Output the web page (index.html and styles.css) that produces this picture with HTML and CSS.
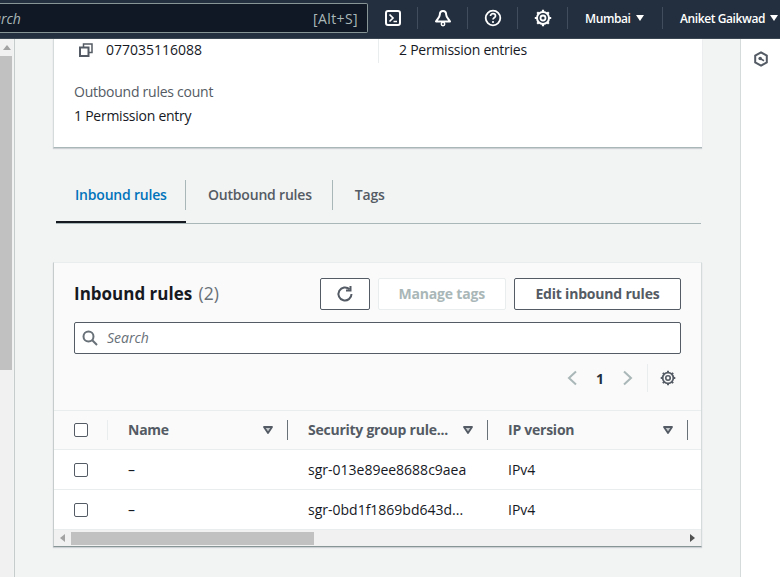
FILE: index.html
```html
<!DOCTYPE html>
<html lang="en">
<head>
  <meta charset="UTF-8">
  <title>Security group - Inbound rules</title>
  <link rel="stylesheet" href="styles.css">
</head>
<body>

<header class="topbar">
  <div class="search-box">
    <span class="search-text">Search</span>
    <span class="search-key">[Alt+S]</span>
  </div>
  <div class="top-item top-icon">
    <svg width="18" height="18" viewBox="0 0 18 18"><rect x="2" y="2" width="14" height="14" rx="2" fill="none" stroke="#fff" stroke-width="2"/><path d="M5.500 5.500L9 9l-3.500 3.500M9.500 12.500h3.500" fill="none" stroke="#fff" stroke-width="1.700"/></svg>
  </div>
  <div class="top-item top-icon">
    <svg width="18" height="18" viewBox="0 0 18 18"><path d="M9 2C6.800 2 5.800 3.800 5.800 5.800c0 2.400-2.300 4-3.800 6.700h14c-1.500-2.700-3.800-4.300-3.800-6.700C12.200 3.800 11.200 2 9 2z" fill="none" stroke="#fff" stroke-width="2" stroke-linejoin="round"/><circle cx="9" cy="15" r="1.700" fill="none" stroke="#fff" stroke-width="1.500"/></svg>
  </div>
  <div class="top-item top-icon">
    <svg width="18" height="18" viewBox="0 0 18 18"><circle cx="9" cy="9" r="7.300" fill="none" stroke="#fff" stroke-width="1.800"/><path d="M6.500 7c0-1.500 1.100-2.300 2.500-2.300s2.500.9 2.500 2.200c0 1.900-2.500 1.800-2.500 3.700" fill="none" stroke="#fff" stroke-width="1.700"/><circle cx="9" cy="13" r="1.100" fill="#fff"/></svg>
  </div>
  <div class="top-item top-icon">
    <svg width="18" height="18" viewBox="0 0 18 18"><circle cx="9" cy="9" r="6" fill="none" stroke="#fff" stroke-width="2"/><circle cx="9" cy="9" r="2.500" fill="none" stroke="#fff" stroke-width="1.800"/><path d="M9 .8v2.400M9 14.800v2.400M.8 9h2.400M14.800 9h2.400M3.200 3.200l1.700 1.700M13.100 13.100l1.700 1.700M3.200 14.800l1.700-1.700M13.100 4.900l1.700-1.700" stroke="#fff" stroke-width="2.200"/></svg>
  </div>
  <div class="top-item top-menu">Mumbai <span class="caret"></span></div>
  <div class="top-item top-menu last">Aniket Gaikwad <span class="caret"></span></div>
</header>

<div class="shell">
  <aside class="nav-scroll">
    <div class="nav-track">
      <span class="arrow-up"></span>
      <div class="nav-thumb"></div>
    </div>
  </aside>

  <main class="content">
    <section class="details">
      <div class="details-row">
        <div class="details-col">
          <div class="owner">
            <svg width="14" height="14" viewBox="0 0 14 14"><rect x="1" y="4.500" width="8.500" height="8.500" fill="none" stroke="#545b64" stroke-width="2"/><path d="M4.500 4V1h8.500v8.500h-3" fill="none" stroke="#545b64" stroke-width="1.500"/></svg>
            <span>077035116088</span>
          </div>
          <div class="label">Outbound rules count</div>
          <div class="value">1 Permission entry</div>
        </div>
        <div class="details-col second">
          <div class="value">2 Permission entries</div>
        </div>
      </div>
    </section>

    <nav class="tabs">
      <div class="tab active"><span>Inbound rules</span></div>
      <div class="tab"><span>Outbound rules</span></div>
      <div class="tab"><span>Tags</span></div>
    </nav>

    <section class="panel">
      <div class="panel-head">
        <h2>Inbound rules <span class="count">(2)</span></h2>
        <div class="actions">
          <button class="btn btn-icon">
            <svg width="18" height="18" viewBox="0 0 18 18"><path d="M15.500 9a6.500 6.500 0 1 1-2-4.700" fill="none" stroke="#545b64" stroke-width="2"/><path d="M14.500 1v4.500H10" fill="none" stroke="#545b64" stroke-width="2"/></svg>
          </button>
          <button class="btn btn-off">Manage tags</button>
          <button class="btn btn-edit">Edit inbound rules</button>
        </div>
      </div>

      <div class="filter">
        <svg width="16" height="16" viewBox="0 0 16 16"><circle cx="6.500" cy="6.500" r="5" fill="none" stroke="#687078" stroke-width="2"/><path d="M10.300 10.300L15 15" stroke="#687078" stroke-width="2"/></svg>
        <span>Search</span>
      </div>

      <div class="pager">
        <svg width="12" height="16" viewBox="0 0 12 16"><path d="M10 1.500L3 8l7 6.500" fill="none" stroke="#aab7b8" stroke-width="2"/></svg>
        <b>1</b>
        <svg width="12" height="16" viewBox="0 0 12 16"><path d="M2 1.500L9 8l-7 6.500" fill="none" stroke="#aab7b8" stroke-width="2"/></svg>
        <span class="pager-sep"></span>
        <svg width="16" height="16" viewBox="0 0 18 18"><circle cx="9" cy="9" r="6" fill="none" stroke="#545b64" stroke-width="2"/><circle cx="9" cy="9" r="2.500" fill="none" stroke="#545b64" stroke-width="1.800"/><path d="M9 .8v2.400M9 14.800v2.400M.8 9h2.400M14.800 9h2.400M3.200 3.200l1.700 1.700M13.100 13.100l1.700 1.700M3.200 14.800l1.700-1.700M13.100 4.900l1.700-1.700" stroke="#545b64" stroke-width="2.200"/></svg>
      </div>

      <div class="grid-row grid-head">
        <div class="c-check"><span class="check"></span></div>
        <div class="c-name"><span>Name</span><svg class="sort" width="10" height="8" viewBox="0 0 10 8"><path d="M1 1h8L5 7z" fill="#c4c9cc" stroke="#545b64" stroke-width="1.800" stroke-linejoin="round"/></svg></div>
        <div class="c-rule"><span>Security group rule...</span><svg class="sort" width="10" height="8" viewBox="0 0 10 8"><path d="M1 1h8L5 7z" fill="#c4c9cc" stroke="#545b64" stroke-width="1.800" stroke-linejoin="round"/></svg></div>
        <div class="c-ip"><span>IP version</span><svg class="sort" width="10" height="8" viewBox="0 0 10 8"><path d="M1 1h8L5 7z" fill="#c4c9cc" stroke="#545b64" stroke-width="1.800" stroke-linejoin="round"/></svg></div>
      </div>
      <div class="grid-row">
        <div class="c-check"><span class="check"></span></div>
        <div class="c-name">–</div>
        <div class="c-rule">sgr-013e89ee8688c9aea</div>
        <div class="c-ip">IPv4</div>
      </div>
      <div class="grid-row">
        <div class="c-check"><span class="check"></span></div>
        <div class="c-name">–</div>
        <div class="c-rule">sgr-0bd1f1869bd643d...</div>
        <div class="c-ip">IPv4</div>
      </div>

      <div class="hscroll">
        <span class="arrow-left"></span>
        <div class="hscroll-thumb"></div>
        <span class="arrow-right"></span>
      </div>
    </section>
  </main>

  <aside class="side-rail">
    <svg width="16" height="16" viewBox="0 0 16 16"><path d="M8 1.300l5.800 3.300v6.800L8 14.700l-5.800-3.300V4.600z" fill="none" stroke="#545b64" stroke-width="2"/><circle cx="7.200" cy="7.500" r="1.800" fill="#545b64"/><path d="M8 8l3 1.800" stroke="#545b64" stroke-width="1.600"/></svg>
  </aside>
</div>

</body>
</html>
```

FILE: styles.css
```css
* { box-sizing: border-box; }
html, body { height: 100%; }
body {
  margin: 0;
  overflow: hidden;
  font-family: "Open Sans", "Noto Sans", sans-serif;
  font-size: 14px;
  color: #16191f;
  background: #f2f3f3;
}

/* top bar */
.topbar {
  height: 39px;
  display: flex;
  align-items: center;
  padding-bottom: 2px;
  background: #232f3e;
  border-bottom: 1px solid #3b4653;
  color: #fff;
}
.search-box {
  width: 368px;
  height: 30px;
  display: flex;
  align-items: center;
  justify-content: space-between;
  padding-right: 9px;
  background: #0f1824;
  border: 1px solid #879596;
  border-left: none;
  border-radius: 0 2px 2px 0;
  color: #aab7b8;
  font-size: 14px;
}
.search-text { font-style: italic; margin-left: -21px; }
.search-key { letter-spacing: .4px; }
.top-item {
  height: 22px;
  display: flex;
  align-items: center;
  border-right: 1px solid #414d5c;
}
.top-icon { width: 50px; justify-content: center; }
.top-menu {
  padding-left: 17px;
  width: 95px;
  gap: 5px;
  font-size: 12px;
  font-weight: 600;
  letter-spacing: -.4px;
  white-space: nowrap;
}
.top-menu.last { width: auto; border-right: none; }
.caret {
  width: 0;
  height: 0;
  border-left: 4px solid transparent;
  border-right: 4px solid transparent;
  border-top: 6px solid #fff;
}

.shell { display: flex; height: 538px; }

/* left nav scrollbar */
.nav-scroll {
  width: 15px;
  flex: none;
  border-right: 1px solid #c6cccc;
}
.nav-track { width: 13px; height: 100%; background: #f1f1f1; padding-top: 6px; }
.arrow-up {
  display: block;
  width: 0;
  height: 0;
  margin: 0 auto 6px;
  border-left: 4px solid transparent;
  border-right: 4px solid transparent;
  border-bottom: 5px solid #a3a3a3;
}
.nav-thumb { width: 12px; height: 314px; background: #c1c1c1; }

/* main column */
.content { width: 725px; flex: none; padding-left: 38px; }

.details {
  width: 649px;
  height: 109px;
  padding-left: 20px;
  background: #fff;
  border-left: 1px solid #d5dbdb;
  border-bottom: 1px solid #aab7b8;
  box-shadow: 0 1px 1px rgba(0, 22, 43, .15);
}
.details-row { display: flex; }
.details-col { width: 304px; }
.details-col.second { padding-left: 20px; height: 24px; border-left: 1px solid #eaeded; }
.details-col.second .value { margin-top: 0; line-height: 22px; }
.owner { display: flex; align-items: center; gap: 13px; height: 21px; padding-left: 5px; }
.label { margin-top: 22px; color: #545b64; line-height: 20px; letter-spacing: -.25px; }
.value { margin-top: 2px; line-height: 24px; letter-spacing: -.25px; }

.tabs {
  width: 645px;
  height: 76px;
  margin-left: 3px;
  padding-top: 32px;
  display: flex;
  border-bottom: 1px solid #aab7b8;
}
.tab {
  height: 43px;
  font-weight: 600;
  letter-spacing: -.2px;
  color: #545b64;
  white-space: nowrap;
}
.tab span { display: block; padding: 0 20px 0 22px; line-height: 30px; border-right: 1px solid #aab7b8; }
.tab:last-child span { border-right: none; }
.tab.active { width: 130px; color: #0073bb; border-bottom: 2px solid #16191f; }
.tab.active span { padding-left: 19px; padding-right: 0; }

/* rules table panel */
.panel {
  width: 649px;
  height: 285px;
  margin-top: 38px;
  background: #fafafa;
  border-top: 1px solid #eaeded;
  border-bottom: 1px solid #879596;
  border-left: 1px solid #c6cccc;
  border-right: 1px solid #d5dbdb;
  box-shadow: 0 1px 1px rgba(0, 22, 43, .15);
}
.panel-head { height: 59px; padding: 15px 20px 0; display: flex; justify-content: space-between; }
h2 { margin: 0; font-size: 17px; line-height: 30px; font-weight: 700; }
.count { margin-left: 2px; font-size: 17.500px; font-weight: 400; color: #687078; }
.actions { display: flex; gap: 8px; }
.btn {
  height: 32px;
  padding: 0 20px 2px;
  background: #fff;
  border: 1px solid #545b64;
  border-radius: 2px;
  font: 700 14px "Open Sans", sans-serif;
  letter-spacing: -.2px;
  color: #545b64;
}
.btn-icon { width: 50px; padding: 0; display: flex; align-items: center; justify-content: center; }
.btn-off { border-color: #eaeded; color: #aab7b8; }
.btn-edit { padding: 0 20.500px 2px; }

.filter {
  height: 32px;
  margin: 0 20px;
  padding: 0 0 1px 7px;
  display: flex;
  align-items: center;
  gap: 9px;
  background: #fff;
  border: 1px solid #545b64;
  border-radius: 2px;
  font-style: italic;
  color: #687078;
}

.pager {
  height: 56px;
  padding: 0 25px 8px 0;
  display: flex;
  align-items: center;
  justify-content: flex-end;
}
.pager b { width: 44px; text-align: center; color: #232f3e; }
.pager-sep { height: 28px; margin: 0 12px 0 13px; border-left: 1px solid #eaeded; }

.grid-row { display: flex; height: 40px; align-items: center; background: #fff; border-bottom: 1px solid #eaeded; }
.grid-head { background: #fafafa; border-top: 1px solid #eaeded; font-weight: 700; letter-spacing: -.25px; color: #545b64; }
.grid-head span { margin-top: -2px; }
.grid-head .check { margin-top: 0; }
.grid-row > div { display: flex; align-items: center; height: 100%; }
.c-check { width: 54px; padding-left: 20px; }
.grid-head .c-check::after { content: ""; height: 20px; margin-left: 19px; border-left: 1px solid #eaeded; }
.c-name { width: 180px; padding-left: 20px; }
.c-rule { width: 200px; padding-left: 20px; white-space: nowrap; }
.c-ip { width: 200px; padding-left: 20px; }
.grid-head .c-name, .grid-head .c-rule, .grid-head .c-ip { position: relative; justify-content: space-between; padding-right: 15px; }
.grid-head .c-name::after, .grid-head .c-rule::after, .grid-head .c-ip::after {
  content: "";
  position: absolute;
  right: 0;
  top: 9px;
  height: 20px;
  border-right: 1px solid #687078;
}
.check { display: block; width: 14px; height: 14px; background: #fff; border: 1px solid #545b64; border-radius: 2px; }

.hscroll {
  height: 16px;
  display: flex;
  align-items: center;
  padding: 0 6px;
  background: #f1f1f1;
}
.arrow-left, .arrow-right {
  width: 0;
  height: 0;
  border-top: 4px solid transparent;
  border-bottom: 4px solid transparent;
}
.arrow-left { border-right: 5px solid #a3a3a3; }
.arrow-right { border-left: 5px solid #505050; margin-left: auto; }
.hscroll-thumb { width: 243px; height: 13px; margin-left: 6px; background: #c1c1c1; }

.side-rail {
  width: 40px;
  flex: none;
  padding: 12px 0 0 12px;
  background: #fff;
  border-left: 1px solid #d5dbdb;
}
```
